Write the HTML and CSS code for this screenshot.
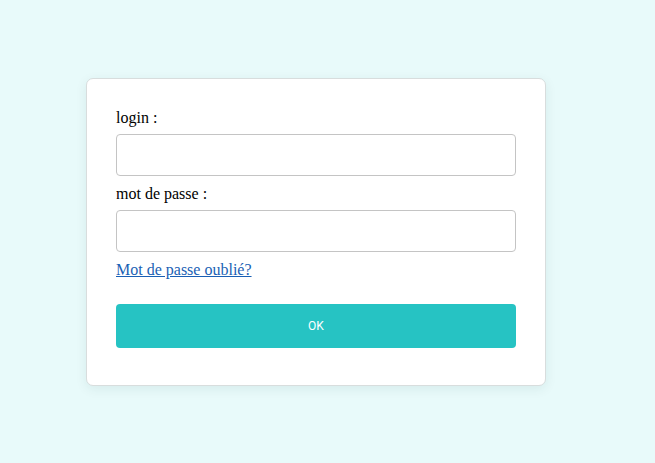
FILE: index.html
```html
<!DOCTYPE html>
<html>
<head>
<meta charset="utf-8">
<link rel="stylesheet" href="styles.css">
</head>
<body>
<div class="page">
  <form class="card">
    <label class="label" for="login">login :</label>
    <input class="field" id="login" type="text">
    <label class="label" for="pwd">mot de passe :</label>
    <input class="field" id="pwd" type="password">
    <a class="forgot" href="#">Mot de passe oublié?</a>
    <button class="ok" type="button">OK</button>
  </form>
</div>
</body>
</html>
```
FILE: styles.css
```css
html, body {
  margin: 0;
  padding: 0;
  height: 100%;
}
body {
  background: #e8fafa;
  font-family: "Liberation Serif", "Times New Roman", serif;
}
.page {
  padding-top: 78px;
  padding-left: 86px;
}
.card {
  box-sizing: border-box;
  width: 460px;
  height: 308px;
  background: #ffffff;
  border: 1px solid #d8dddd;
  border-radius: 7px;
  box-shadow: 0 3px 12px rgba(0, 60, 60, 0.08);
  padding: 30px 29px 0 29px;
  display: flex;
  flex-direction: column;
  margin: 0;
}
.label {
  font-size: 16px;
  line-height: 18px;
  color: #000;
  margin-bottom: 7px;
}
.field {
  box-sizing: border-box;
  width: 400px;
  height: 42px;
  border: 1px solid #c4c4c4;
  border-radius: 4px;
  background: #fff;
  margin: 0 0 9px 0;
  padding: 0 10px;
  font-size: 15px;
  outline: none;
}
.forgot {
  font-size: 16px;
  line-height: 18px;
  color: #1a5fb4;
  text-decoration: underline;
  align-self: flex-start;
  margin-top: 0;
}
.ok {
  margin-top: 25px;
  width: 400px;
  height: 44px;
  border: none;
  border-radius: 4px;
  background: #26c3c3;
  color: #ffffff;
  font-family: Roboto, "Liberation Sans", sans-serif;
  font-size: 12px;
  cursor: pointer;
}
```
